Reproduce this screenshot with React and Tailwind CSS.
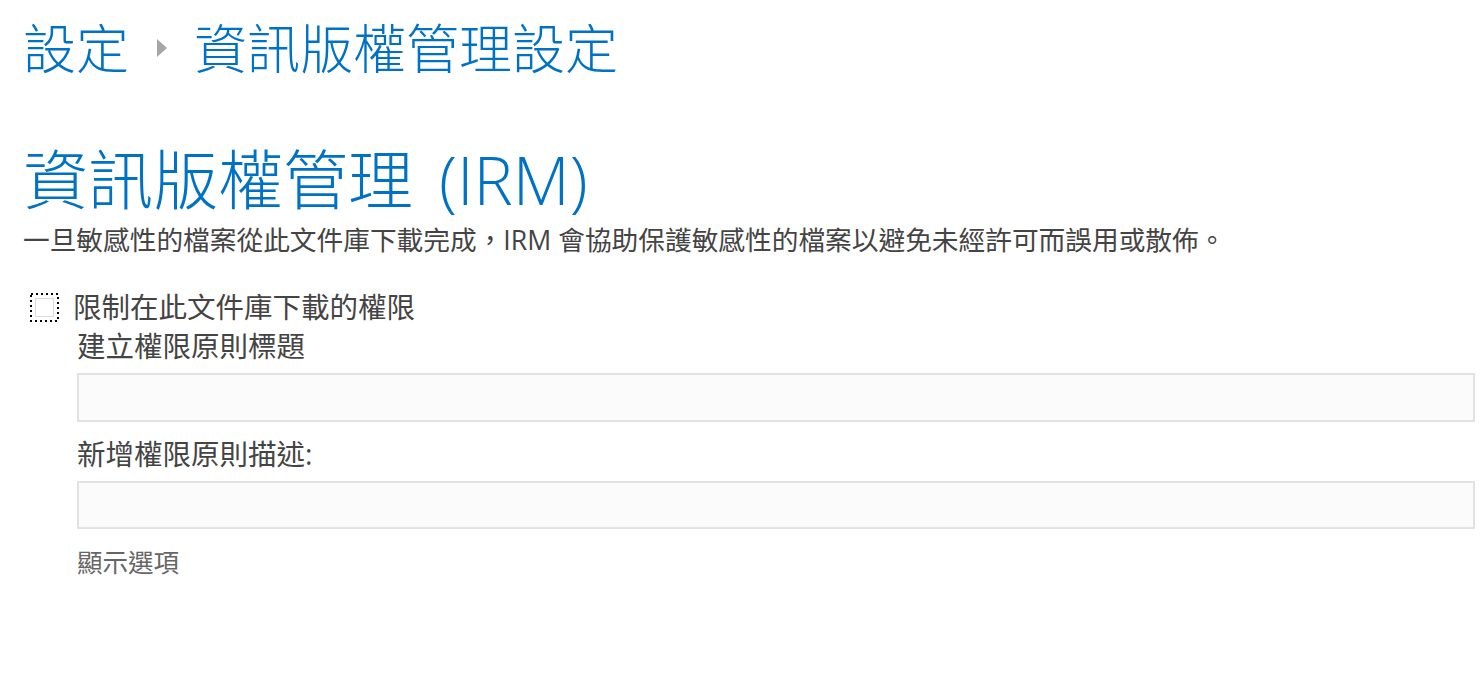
import React from "react";

const font = { fontFamily: '"Segoe UI", "Open Sans", "Noto Sans CJK TC", sans-serif' };

function DottedBox() {
    return (
        <svg width="29" height="29" viewBox="0 0 29 29" className="shrink-0 block">
            <rect x="1" y="1" width="27" height="27" fill="none" stroke="#000" strokeWidth="2" strokeDasharray="2 3" />
            <rect x="5.5" y="5.5" width="18" height="18" fill="#fff" stroke="#dcdcdc" strokeWidth="1" />
        </svg>
    );
}

export default function App() {
    return (
        <div className="bg-white min-h-screen pl-[23px] pr-[7px] text-[#444]" style={font}>
            {/* breadcrumb */}
            <div className="flex items-center h-[56px] pt-[20px] box-content text-[53px] font-light text-[#0072c6] leading-none">
                <span>設定</span>
                <span className="ml-[28px] w-0 h-0 border-y-[9px] border-y-transparent border-l-[10px] border-l-[#a6a6a6]"></span>
                <span className="ml-[27px]">資訊版權管理設定</span>
            </div>

            <h1 className="mt-[68px] h-[70px] flex items-center text-[65px] font-light text-[#0072c6] leading-none">
                <span>資訊版權管理</span>
                <span className="ml-[26px] text-[66px]">(IRM)</span>
            </h1>

            <p className="mt-[12px] h-[28px] flex items-center text-[26.7px] leading-none">
                一旦敏感性的檔案從此文件庫下載完成，IRM 會協助保護敏感性的檔案以避免未經許可而誤用或散佈。
            </p>

            <label className="mt-[39px] h-[28px] flex items-center text-[28.5px] leading-none">
                <span className="ml-[7px]"><DottedBox /></span>
                <span className="ml-[14px]">限制在此文件庫下載的權限</span>
            </label>

            <div className="pl-[54px]">
                <div className="mt-[11px] h-[28px] flex items-center text-[28.5px] leading-none">建立權限原則標題</div>
                <input type="text" className="mt-[13px] block w-full h-[49px] bg-[#fbfbfb] border-2 border-[#e1e1e1] outline-none" />

                <div className="mt-[18px] h-[28px] flex items-center text-[28.5px] leading-none">新增權限原則描述:</div>
                <input type="text" className="mt-[13px] block w-full h-[48px] bg-[#fbfbfb] border-2 border-[#e1e1e1] outline-none" />

                <div className="mt-[20px] h-[28px] flex items-center text-[25.5px] text-[#666] leading-none">顯示選項</div>
            </div>
        </div>
    );
}
